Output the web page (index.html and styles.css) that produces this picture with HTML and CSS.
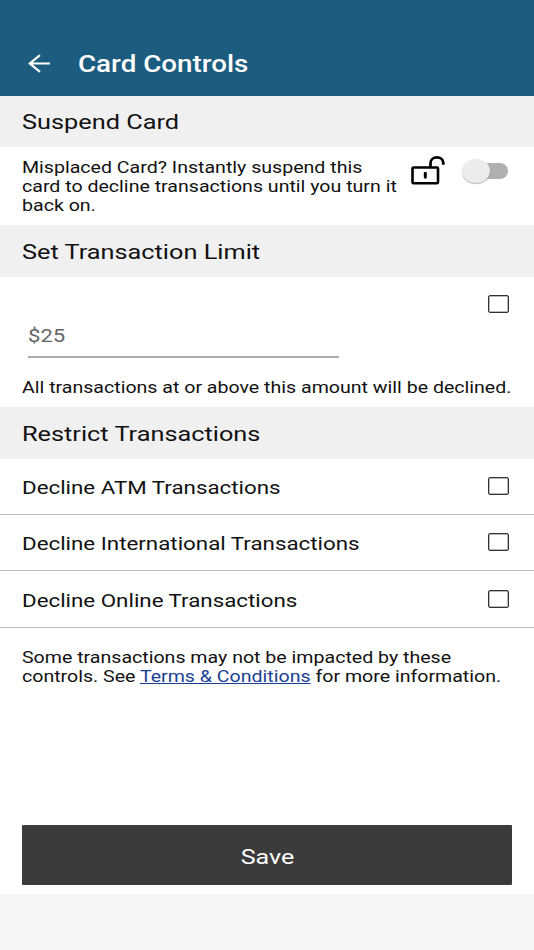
FILE: index.html
```html
<!DOCTYPE html>
<html lang="en">
<head>
<meta charset="utf-8">
<title>Card Controls</title>
<link rel="stylesheet" href="styles.css">
</head>
<body>
<div class="screen">
  <header class="app-bar">
    <svg class="back" viewBox="0 0 24 20" width="24" height="20"><path d="M23 9.500H3M13 1.200L2.800 9.500l10.200 8.300" fill="none" stroke="#fff" stroke-width="2.200"/></svg>
    <h1 class="title wide">Card Controls</h1>
  </header>
  <main>
    <h2 class="section"><span class="wide">Suspend Card</span></h2>
    <div class="suspend">
      <p class="body wide">Misplaced Card? Instantly suspend this<br>card to decline transactions until you turn it<br>back on.</p>
      <svg class="lock" viewBox="0 0 36 30" width="36" height="30"><rect x="2.500" y="12.500" width="25.500" height="15.700" rx="1" fill="none" stroke="#000" stroke-width="2.600"/><path d="M20.500 12V8c0-3.200 2.800-5.600 6.500-5.600s6.300 2.400 6.300 5.600v1.800" fill="none" stroke="#000" stroke-width="2.700"/><rect x="13.800" y="17" width="3" height="6.500" rx="1"/></svg>
      <div class="switch"><span class="knob"></span></div>
    </div>
    <h2 class="section"><span class="wide">Set Transaction Limit</span></h2>
    <div class="limit">
      <div class="amount"><span class="value wide">$25</span></div>
      <span class="check"></span>
    </div>
    <p class="note body"><span class="wide">All transactions at or above this amount will be declined.</span></p>
    <h2 class="section"><span class="wide">Restrict Transactions</span></h2>
    <div class="row"><span class="label wide">Decline ATM Transactions</span><span class="check"></span></div>
    <div class="row"><span class="label wide">Decline International Transactions</span><span class="check"></span></div>
    <div class="row"><span class="label wide">Decline Online Transactions</span><span class="check"></span></div>
    <p class="terms body wide">Some transactions may not be impacted by these<br>controls. See <a href="#">Terms &amp; Conditions</a> for more information.</p>
    <button class="save"><span class="wide">Save</span></button>
  </main>
</div>
</body>
</html>
```
FILE: styles.css
```css
* { box-sizing: border-box; }
body { margin: 0; background: #f5f5f5; font-family: Roboto, sans-serif; color: #111; }
h1, h2, p { margin: 0; font-weight: 400; }
.screen { width: 534px; height: 950px; overflow: hidden; }
.wide { display: inline-block; white-space: nowrap; transform: scaleX(1.194); transform-origin: 0 50%; }

.app-bar { height: 95.5px; background: #1b5c7f; display: flex; align-items: center; padding: 32px 0 0 27px; }
.back { flex: none; }
.title { margin: 2px 0 0 27px; color: #fff; font-size: 23px; font-weight: 500; line-height: 28px; transform: scaleX(1.207); }

main { height: 798.500px; background: #fff; display: flex; flex-direction: column; }
.section { height: 51.750px; flex: none; background: #f0f0f0; display: flex; align-items: center; padding: 2px 0 0 22px; font-size: 21px; line-height: 26px; }
.section .wide { transform: scaleX(1.205); }
.body { font-size: 16.400px; line-height: 19px; }

.suspend { height: 78px; flex: none; display: flex; align-items: flex-start; padding: 11px 0 0 22px; }
.suspend .body { width: 387.500px; flex: none; }
.lock { flex: none; margin-top: -3px; }
.switch { margin: 5px 0 0 17px; width: 45px; height: 16px; border-radius: 10px; background: linear-gradient(#b0b0b0, #b0b0b0) 20px 0 / 25px 16px no-repeat; }
.knob { display: block; width: 28px; height: 24px; margin: -4px 0 0 -0.500px; border-radius: 50%; background: #ececec; box-shadow: 0 1px 1px rgba(0, 0, 0, .3); }

.limit { height: 100px; flex: none; display: flex; justify-content: space-between; align-items: flex-start; padding: 18px 25px 0 28px; }
.amount { width: 311px; height: 62.500px; border-bottom: 2px solid #aaa; padding-top: 29px; }
.value { font-size: 18.500px; line-height: 24px; color: #666; }
.check { flex: none; width: 21px; height: 18px; border: 1px solid #333; border-radius: 2px; box-shadow: inset 0 0 0 .5px #777; }
.note { height: 30px; flex: none; padding: 1px 0 0 22px; }

.row { height: 56.250px; flex: none; display: flex; align-items: center; justify-content: space-between; padding: 0 25px 0.500px 22px; border-bottom: 1px solid #bfbfbf; }
.label { font-size: 18.500px; line-height: 24px; margin-top: 4px; transform: scaleX(1.207); }
.terms { margin: 20px 0 0 22px; align-self: flex-start; }
.terms a { color: #1a3f94; }

.save { margin: auto 22px 9px; height: 60px; flex: none; border: 0; border-radius: 1px; background: #3b3b3b; color: #fff; font: 400 21px Roboto, sans-serif; padding: 3px 0 0; }
.save .wide { transform-origin: 50% 50%; }
```
